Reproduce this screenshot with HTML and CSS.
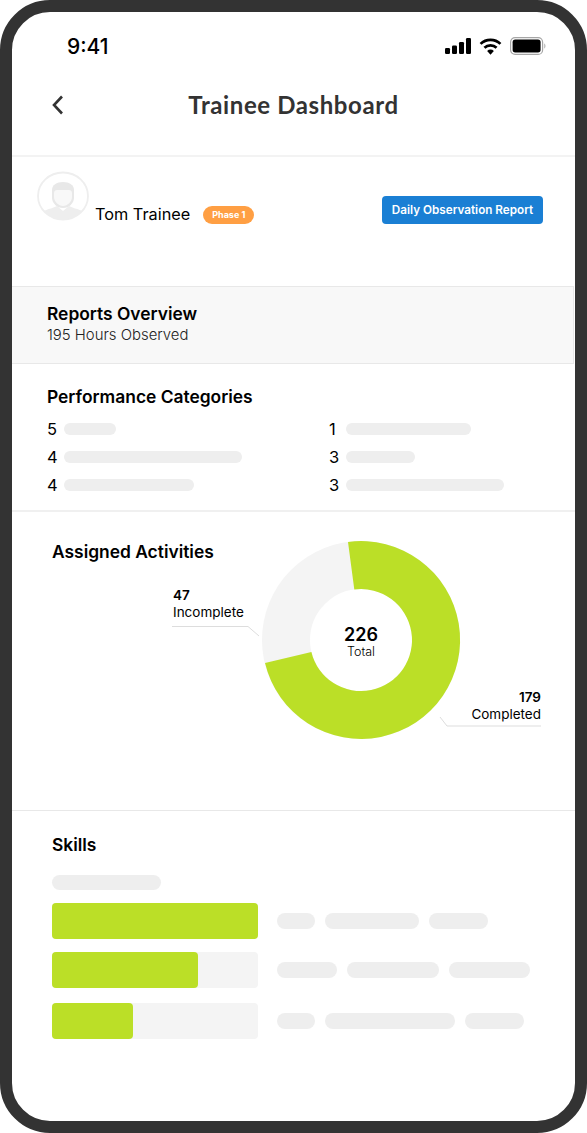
FILE: index.html
```html
<!DOCTYPE html>
<html lang="en">
  <head>
    <meta charset="UTF-8" />
    <meta name="viewport" content="width=device-width, initial-scale=1.0" />
    <title>Trainee Dashboard</title>
    <link rel="stylesheet" href="styles.css">
  </head>
  <body>
    <div class="phone">
      <!-- Status bar -->
      <div class="statusBar">
        <span class="time">9:41</span>
        <div class="statusIcons">
          <svg width="26" height="16" viewBox="0 0 26 16">
            <rect x="0" y="10" width="5" height="6" rx="1.2" fill="#000" />
            <rect x="7" y="7.5" width="5" height="8.5" rx="1.2" fill="#000" />
            <rect x="14" y="4" width="5" height="12" rx="1.2" fill="#000" />
            <rect x="21" y="0" width="5" height="16" rx="1.2" fill="#000" />
          </svg>
          <svg width="23" height="17" viewBox="0 0 22 16">
            <path d="M1.500 5.500a13.500 13.500 0 0 1 19 0" fill="none" stroke="#000" stroke-width="2.600" />
            <path d="M5.200 9.200a8.300 8.300 0 0 1 11.600 0" fill="none" stroke="#000" stroke-width="2.600" />
            <path d="M7.800 12.200a4.500 4.500 0 0 1 6.400 0L11 16z" fill="#000" />
          </svg>
          <svg width="36" height="18" viewBox="0 0 36 18">
            <rect x="0.600" y="0.600" width="32" height="16.800" rx="4.500" fill="none" stroke="#a6a6a6" stroke-width="1.200" />
            <rect x="2.600" y="2.600" width="28" height="12.800" rx="2.600" fill="#000" />
            <path d="M34 6.500v5c1-.3 1.600-1.300 1.600-2.500S35 6.800 34 6.500z" fill="#c4c4c4" />
          </svg>
        </div>
      </div>

      <!-- Nav -->
      <div class="navBar">
        <svg class="backIcon" width="12" height="20" viewBox="0 0 12 20">
          <path d="M10 1.500 2 10l8 8.500" fill="none" stroke="#333" stroke-width="2.600" />
        </svg>
        <h1>Trainee Dashboard</h1>
      </div>

      <!-- Profile -->
      <div class="profile">
        <svg class="avatar" width="52" height="50" viewBox="0 0 52 50">
          <defs>
            <clipPath id="avatarClip"><ellipse cx="26" cy="25" rx="25" ry="23.500" /></clipPath>
          </defs>
          <ellipse cx="26" cy="25" rx="25" ry="23.500" fill="#fff" stroke="#eee" stroke-width="1.800" />
          <g clip-path="url(#avatarClip)">
            <path d="M2 50c0-8 5-11 12-12.500l6-2.500h12l6 2.500c7 1.500 12 4.500 12 12.500z" fill="#eee" />
            <path d="M20 35l6 5 6-5-1-3H21z" fill="#fff" />
          </g>
          <path d="M15 27v-8c0-5 4.500-8 11-8s11 3 11 8v8c0 5-5 10-11 10s-11-5-11-10z" fill="#e8e8e8" />
          <path d="M17 26v-4c0-2 1.500-3 3-3h12c1.500 0 3 1 3 3v4c0 4.500-4.500 9-9 9s-9-4.500-9-9z" fill="#f8f8f8" />
        </svg>
        <span class="name">Tom Trainee</span>
        <span class="phaseBadge">Phase 1</span>
        <button class="reportButton">Daily Observation Report</button>
      </div>

      <!-- Reports -->
      <div class="overview">
        <h2>Reports Overview</h2>
        <p>195 Hours Observed</p>
      </div>

      <!-- Performance -->
      <div class="performance">
        <h2>Performance Categories</h2>
        <div class="catGrid">
          <div class="catRow"><span>5</span><i class="catBar" style="width: 52px"></i></div>
          <div class="catRow"><span>1</span><i class="catBar" style="width: 125px"></i></div>
          <div class="catRow"><span>4</span><i class="catBar" style="width: 178px"></i></div>
          <div class="catRow"><span>3</span><i class="catBar" style="width: 69px"></i></div>
          <div class="catRow"><span>4</span><i class="catBar" style="width: 130px"></i></div>
          <div class="catRow"><span>3</span><i class="catBar" style="width: 158px"></i></div>
        </div>
      </div>

      <!-- Activities -->
      <div class="activities">
        <h2>Assigned Activities</h2>
        <svg class="donut" width="563" height="298" viewBox="0 0 563 298">
          <g transform="translate(349 128)">
            <circle r="75" fill="none" stroke="#f4f4f4" stroke-width="48" />
            <path d="M-13-98A98.900 98.900 0 1 1-96 23L-49.600 11.900A51 51 0 1 0-6.700-50.500Z" fill="#bbdf27" />
          </g>
          <path d="M160 114.500H236L247 124" fill="none" stroke="#ddd" />
          <path d="M529 214H435L428 205" fill="none" stroke="#ddd" />
        </svg>
        <div class="donutCenter"><strong>226</strong><span>Total</span></div>
        <div class="donutLabel incomplete"><strong>47</strong><span>Incomplete</span></div>
        <div class="donutLabel completed"><strong>179</strong><span>Completed</span></div>
      </div>

      <!-- Skills -->
      <div class="skills">
        <h2>Skills</h2>
        <i class="pill skillsHeader"></i>
        <div class="skillRow">
          <div class="track"><div class="fill" style="width: 206px"></div></div>
          <div class="pills">
            <i class="pill" style="width: 38px"></i>
            <i class="pill" style="width: 94px"></i>
            <i class="pill" style="width: 59px"></i>
          </div>
        </div>
        <div class="skillRow">
          <div class="track"><div class="fill" style="width: 146px"></div></div>
          <div class="pills">
            <i class="pill" style="width: 60px"></i>
            <i class="pill" style="width: 92px"></i>
            <i class="pill" style="width: 81px"></i>
          </div>
        </div>
        <div class="skillRow">
          <div class="track"><div class="fill" style="width: 81px"></div></div>
          <div class="pills">
            <i class="pill" style="width: 38px"></i>
            <i class="pill" style="width: 130px"></i>
            <i class="pill" style="width: 59px"></i>
          </div>
        </div>
      </div>
    </div>
  </body>
</html>
```

FILE: styles.css
```css
* {
  box-sizing: border-box;
}
body {
  margin: 0;
  background-color: #fff;
  font-family: "Inter", "Liberation Sans", sans-serif;
  color: #000;
}
h1,
h2,
p {
  margin: 0;
}
.phone {
  width: 587px;
  height: 1133px;
  border: 12px solid #333;
  border-radius: 50px;
  background-color: #fff;
  overflow: hidden;
}
.statusBar {
  display: flex;
  justify-content: space-between;
  align-items: center;
  height: 68px;
  padding: 0 29px 0 55px;
}
.time {
  font-size: 21px;
  font-weight: 500;
}
.statusIcons {
  display: flex;
  align-items: center;
  gap: 8px;
}
.navBar {
  position: relative;
  height: 77px;
  padding-bottom: 27px;
  display: flex;
  align-items: center;
  justify-content: center;
  border-bottom: 2px solid #f3f3f3;
}
.navBar h1 {
  font-family: "Lato", "Liberation Sans", sans-serif;
  font-size: 24px;
  font-weight: 700;
  letter-spacing: 0.6px;
  color: #333;
}
.backIcon {
  position: absolute;
  left: 40px;
  top: 15px;
}
.profile {
  position: relative;
  height: 129px;
  display: flex;
  align-items: flex-start;
  padding: 47px 32px 0 83px;
}
.avatar {
  position: absolute;
  left: 25px;
  top: 14px;
}
.name {
  font-size: 16.300px;
  line-height: 20px;
}
.phaseBadge {
  margin: 2px 0 0 13px;
  width: 51px;
  height: 18px;
  border-radius: 9px;
  background-color: #ff9f43;
  color: #fff;
  font-size: 9px;
  font-weight: 700;
  line-height: 18px;
  text-align: center;
}
.reportButton {
  margin: -8px 0 0 auto;
  width: 161px;
  height: 28px;
  padding: 0;
  border: none;
  border-radius: 4px;
  background-color: #1a7fd4;
  color: #fff;
  font-family: inherit;
  font-size: 11.700px;
  font-weight: 600;
}
.overview {
  height: 78px;
  padding: 16px 35px 0;
  background-color: #f8f8f8;
  border: 1px solid #e8e8e8;
  border-width: 1px 1px 1px 0;
  margin-right: 1px;
}
h2 {
  font-size: 17.400px;
  font-weight: 600;
  line-height: 21px;
}
.overview p {
  font-size: 14.900px;
  font-weight: 300;
  line-height: 23px;
  color: #222;
}
.performance {
  height: 148px;
  padding: 22px 35px 0;
  border-bottom: 2px solid #f0f0f0;
}
.catGrid {
  display: grid;
  grid-template-columns: 282px 1fr;
  grid-auto-rows: 28px;
  margin-top: 8px;
}
.catRow {
  display: flex;
  align-items: center;
  font-size: 16.500px;
}
.catRow span {
  width: 17px;
}
.catBar,
.pill {
  display: block;
  border-radius: 8px;
  background-color: #eee;
}
.catBar {
  height: 12px;
}
.activities {
  position: relative;
  height: 299px;
  padding: 29px 40px 0;
  border-bottom: 1px solid #e8e8e8;
}
.donut {
  position: absolute;
  left: 0;
  top: 0;
}
.donutCenter {
  position: absolute;
  left: 299px;
  top: 112px;
  width: 100px;
  display: flex;
  flex-direction: column;
  align-items: center;
}
.donutCenter strong {
  font-size: 18px;
  font-weight: 600;
  line-height: 22px;
}
.donutCenter span {
  font-size: 12.500px;
  font-weight: 300;
  line-height: 12px;
}
.donutLabel {
  position: absolute;
  display: flex;
  flex-direction: column;
  font-size: 13.500px;
  line-height: 17px;
}
.donutLabel strong {
  font-weight: 600;
}
.incomplete {
  left: 161px;
  top: 75px;
}
.completed {
  right: 34px;
  top: 177px;
  align-items: flex-end;
}
.skills {
  padding: 23px 40px 0;
}
.skillsHeader {
  width: 109px;
  height: 15px;
  margin-top: 20px;
}
.skillRow {
  display: flex;
  align-items: center;
  gap: 19px;
  margin-top: 13px;
}
.skillRow:last-child {
  margin-top: 15px;
}
.track {
  width: 206px;
  height: 36px;
  border-radius: 4px;
  background-color: #f4f4f4;
}
.fill {
  height: 100%;
  border-radius: 4px;
  background-color: #bbdf27;
}
.pills {
  display: flex;
  gap: 10px;
}
.pills .pill {
  height: 16px;
}
```
